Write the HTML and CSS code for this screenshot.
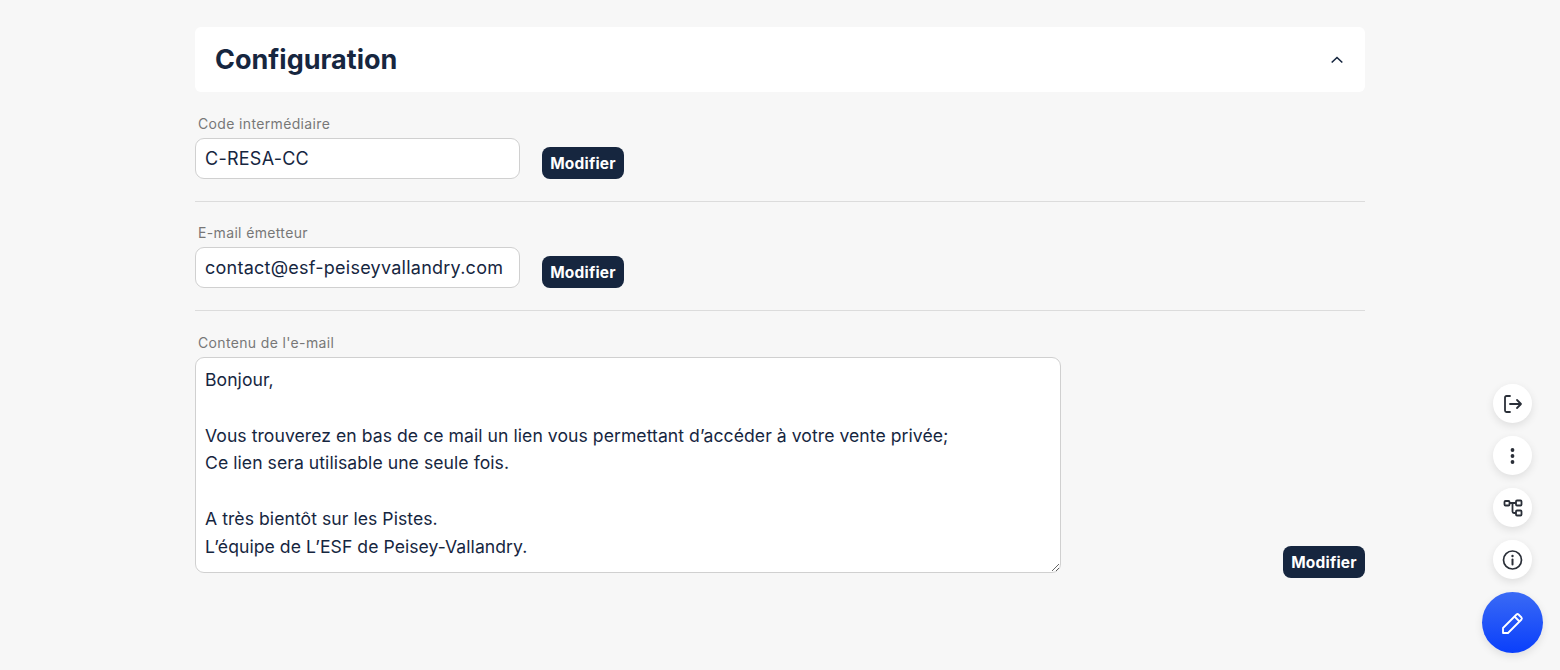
FILE: index.html
```html
<!DOCTYPE html>
<html lang="fr">
<head>
<meta charset="utf-8">
<title>Configuration</title>
<link rel="stylesheet" href="styles.css">
</head>
<body>
<main class="page">
  <header class="panel-head">
    <h1 class="panel-title">Configuration</h1>
    <svg class="chevron" width="14" height="14" viewBox="0 0 14 14" fill="none" stroke="#16263f" stroke-width="1.6"><path d="M1.700 9.500 7 4.500l5.300 5"/></svg>
  </header>
  <section class="field-row first">
    <div class="field">
      <label class="field-label">Code intermédiaire</label>
      <input class="text-input" type="text" value="C-RESA-CC">
    </div>
    <button class="btn">Modifier</button>
  </section>
  <section class="field-row second">
    <div class="field">
      <label class="field-label">E-mail émetteur</label>
      <input class="text-input" type="text" value="contact@esf-peiseyvallandry.com">
    </div>
    <button class="btn">Modifier</button>
  </section>
  <section class="field-row last">
    <div class="field">
      <label class="field-label">Contenu de l'e-mail</label>
      <textarea class="text-area">Bonjour,

Vous trouverez en bas de ce mail un lien vous permettant d’accéder à votre vente privée;
Ce lien sera utilisable une seule fois.

A très bientôt sur les Pistes.
L’équipe de L’ESF de Peisey-Vallandry.</textarea>
    </div>
    <button class="btn btn-end">Modifier</button>
  </section>
</main>
<aside class="fab-stack">
  <button class="fab"><svg width="22" height="22" viewBox="0 0 22 22" fill="none" stroke="#2a2f38" stroke-width="1.8" stroke-linecap="round" stroke-linejoin="round"><path d="M8 3H4.500A1.500 1.500 0 0 0 3 4.500v13A1.500 1.500 0 0 0 4.500 19H8"/><path d="M8 11h11M15 7l4 4-4 4"/></svg></button>
  <button class="fab"><svg width="22" height="22" viewBox="0 0 22 22" fill="#2a2f38"><circle cx="10.500" cy="5" r="1.900"/><circle cx="10.500" cy="11" r="1.900"/><circle cx="10.500" cy="17" r="1.900"/></svg></button>
  <button class="fab"><svg width="22" height="22" viewBox="0 0 22 22" fill="none" stroke="#2a2f38" stroke-width="1.800" stroke-linejoin="round"><rect x="2.500" y="4" width="5" height="4.500" rx="1"/><rect x="14" y="3.500" width="5.500" height="5" rx="1"/><rect x="14" y="13.500" width="5.500" height="5" rx="1"/><path d="M7.500 6H14M10.500 6v8.500a1.500 1.500 0 0 0 1.500 1.500h2"/></svg></button>
  <button class="fab"><svg width="22" height="22" viewBox="0 0 22 22" fill="none" stroke="#2a2f38" stroke-width="1.700"><circle cx="10.500" cy="11" r="9"/><path d="M10.500 10.500v5" stroke-linecap="round" stroke-width="2"/><circle cx="10.500" cy="7" r="1.200" fill="#2a2f38" stroke="none"/></svg></button>
  <button class="fab fab-main"><svg width="26" height="26" viewBox="0 0 26 26" fill="none" stroke="#fff" stroke-width="1.800" stroke-linejoin="round"><path d="M3 18 16.500 4.500a1.500 1.500 0 0 1 2 0l3 3a1.500 1.500 0 0 1 0 2L8 23H3z"/><path d="M14.500 6.500l5 5"/></svg></button>
</aside>
</body>
</html>
```
FILE: styles.css
```css
* { box-sizing: border-box; }
html, body { margin: 0; height: 670px; overflow: hidden; }
body {
  background: #f7f7f7;
  color: #16263f;
  font-family: Inter, "Noto Sans", sans-serif;
}
.page { width: 1170px; margin-left: 195px; padding-top: 27px; }
.panel-head {
  height: 65px;
  background: #fff;
  border-radius: 6px;
  display: flex;
  align-items: center;
  justify-content: space-between;
  padding: 0 20px;
}
.panel-title { margin: 0; font-size: 27px; font-weight: 700; }
.chevron { margin-right: 1.500px; }
.field-row {
  display: flex;
  align-items: flex-end;
  gap: 22px;
  padding: 22px 0 22px;
  border-bottom: 1px solid #dcdcdc;
}
.field-row.second { padding-top: 21px; }
.field-row.last { border-bottom: 0; justify-content: space-between; padding-top: 22px; }
.field-label {
  display: block;
  font-size: 14px;
  line-height: 19px;
  letter-spacing: 0.35px;
  color: #777;
  padding-left: 3px;
  margin-bottom: 5px;
}
.text-input, .text-area {
  font-family: inherit;
  color: #16263f;
  background: #fff;
  border: 1px solid #d0d0d0;
  border-radius: 9px;
  outline: none;
  display: block;
}
.text-input { width: 325px; height: 41px; padding: 0 9px; font-size: 18px; letter-spacing: 0.25px; }
.text-area {
  width: 866px;
  height: 216px;
  padding: 8px 9px;
  font-size: 17.600px;
  letter-spacing: 0.05px;
  line-height: 27.800px;
  resize: both;
}
.btn {
  width: 82px;
  height: 32px;
  border: 0;
  border-radius: 8px;
  background: #16263f;
  color: #fff;
  font-family: inherit;
  font-size: 15.500px;
  font-weight: 700;
  letter-spacing: 0.2px;
  padding: 0;
}
.btn-end { margin-bottom: -5px; }
.fab-stack {
  position: fixed;
  right: 17px;
  bottom: 17px;
  width: 61px;
  display: flex;
  flex-direction: column;
  align-items: center;
  gap: 13px;
}
.fab {
  width: 39px;
  height: 39px;
  border: 0;
  border-radius: 50%;
  background: #fff;
  box-shadow: 0 3px 8px rgba(0,0,0,.10);
  display: flex;
  align-items: center;
  justify-content: center;
  padding: 0;
}
.fab-main {
  width: 61px;
  height: 61px;
  background: linear-gradient(180deg, #3a6af5 0%, #0a3ffb 100%);
}
```
